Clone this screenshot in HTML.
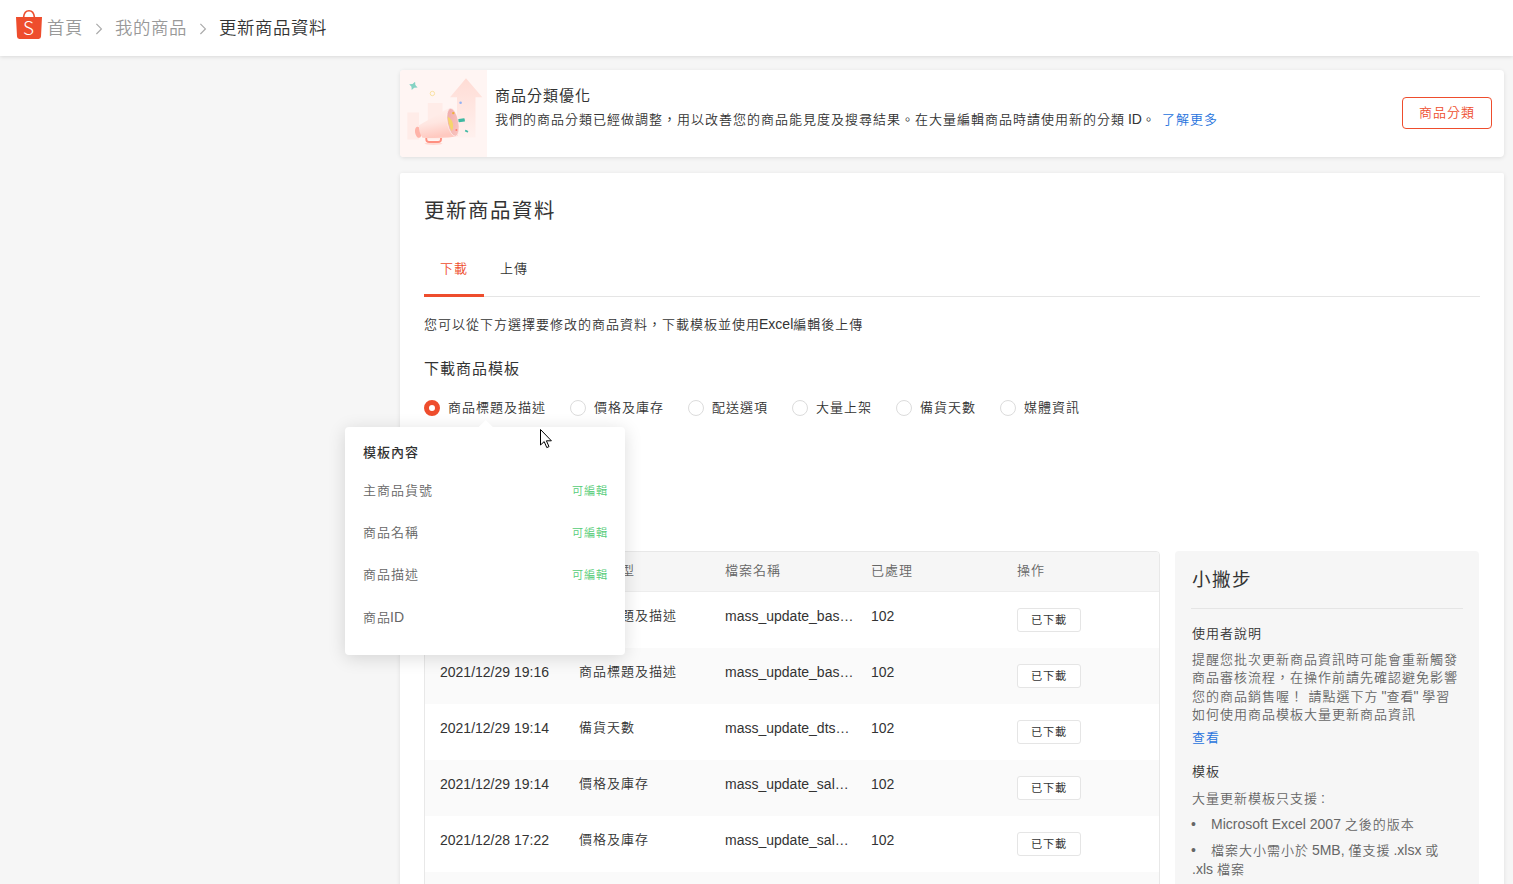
<!DOCTYPE html>
<html lang="zh-Hant">
<head>
<meta charset="utf-8">
<title>更新商品資料</title>
<style>
*{box-sizing:border-box;margin:0;padding:0}
html,body{width:1513px;height:884px;overflow:hidden}
body{background:#f6f6f6;font-family:"Liberation Sans","Noto Sans CJK TC",sans-serif;font-size:13px;letter-spacing:1px;color:#333;position:relative;font-weight:350}
.abs{position:absolute;white-space:nowrap}
/* header */
#hdr{position:absolute;left:0;top:0;width:1513px;height:56px;background:#fff;box-shadow:0 1px 4px rgba(0,0,0,.12);z-index:5}
#hdr .bc{position:absolute;top:0;height:56px;line-height:56px;font-size:17.4px;letter-spacing:.6px;color:#999;white-space:nowrap}
#hdr .cur{color:#333}
/* banner */
#banner{position:absolute;left:400px;top:70px;width:1104px;height:87px;background:#fff;border-radius:4px;box-shadow:0 1px 4px rgba(0,0,0,.1);overflow:hidden}
#banner .pic{position:absolute;left:0;top:0;width:87px;height:87px;background:#fff5f3}
#banner .t1{position:absolute;left:95px;top:15px;font-size:15px;letter-spacing:1px;line-height:22px;color:#333;font-weight:400}
#banner .t2{position:absolute;left:95px;top:39px;font-size:13px;letter-spacing:1px;line-height:20px;color:#333;white-space:nowrap}
#banner .t2 a{color:#2673dd;margin-left:6px}
#banner .btn{position:absolute;left:1002px;top:27px;width:90px;height:32px;border:1px solid #ee4d2d;border-radius:4px;color:#ee4d2d;font-size:13px;letter-spacing:1px;line-height:30px;text-align:center;background:#fff}
/* card */
#card{position:absolute;left:400px;top:173px;width:1104px;height:720px;background:#fff;border-radius:2px;box-shadow:0 1px 4px rgba(0,0,0,.1)}
#card h1{position:absolute;left:24px;top:24px;font-size:20.5px;letter-spacing:1.5px;line-height:28px;font-weight:400;color:#333}
.tabs{position:absolute;left:24px;top:72px;width:1056px;height:52px;border-bottom:1px solid #e5e5e5}
.tab{position:absolute;top:0;height:51px;line-height:48px;font-size:13px;letter-spacing:1px;width:60px;text-align:center;color:#333}
.tab.on{color:#ee4d2d}
.tab.on:after{content:"";position:absolute;left:0;bottom:-1px;width:60px;height:3px;background:#ee4d2d}
.desc{position:absolute;left:24px;top:141px;font-size:13px;letter-spacing:1px;line-height:20px;color:#333}
.h2{position:absolute;left:24px;top:185px;font-size:15px;letter-spacing:1px;line-height:22px;color:#333;font-weight:400}
.radio{position:absolute;top:226px;height:18px;line-height:18px;font-size:13px;letter-spacing:1px;color:#333;white-space:nowrap;padding-left:24px}
.radio i{position:absolute;left:0;top:1px;width:16px;height:16px;border-radius:50%;border:1px solid #dcdcdc;background:#fff}
.radio.on i{border:5px solid #ee4d2d}
/* table */
#tbl{position:absolute;left:24px;top:378px;width:736px;height:400px;border:1px solid #e8e8e8;border-radius:4px;overflow:hidden}
#tbl .th{position:absolute;left:0;top:0;width:100%;height:40px;background:#f6f6f6;border-bottom:1px solid #ededed;color:#666;font-size:13px;letter-spacing:1px;line-height:38px}
#tbl .tr{position:absolute;left:0;width:100%;height:56px;font-size:13px;letter-spacing:1px;color:#333}
#tbl .tr.alt{background:#fafafa}
#tbl span{position:absolute;white-space:nowrap}
#tbl .tr span{top:14px;line-height:20px}
.c1{left:15px}.c2{left:154px}.c3{left:300px}.c4{left:446px}.c5{left:592px}
#tbl .tr b{position:absolute;left:592px;top:16px;width:64px;height:24px;border:1px solid #e5e5e5;border-radius:3px;font-weight:400;font-size:11.2px;letter-spacing:.8px;line-height:22px;text-align:center;color:#333;background:#fff}
/* tips */
#tips{position:absolute;left:775px;top:378px;width:304px;height:400px;background:#f6f6f6;border-radius:4px;color:#666;font-size:13px;letter-spacing:1px}
#tips .tt{position:absolute;left:17px;top:15px;font-size:18.6px;letter-spacing:1.4px;line-height:28px;font-weight:400;color:#333}
#tips .hr{position:absolute;left:16px;top:57px;width:272px;height:1px;background:#e5e5e5}
#tips .sh{position:absolute;left:17px;font-size:13px;letter-spacing:1px;line-height:18px;color:#333;font-weight:350}
#tips p{position:absolute;left:17px;width:280px;font-size:13px;letter-spacing:1px;line-height:18px;color:#666;white-space:nowrap}
#tips a{color:#2673dd}
/* popover */
#pop{position:absolute;left:345px;top:427px;width:280px;height:228px;background:#fff;border-radius:4px;box-shadow:0 3px 18px rgba(0,0,0,.14);z-index:10}
#pop:before{content:"";position:absolute;left:135.6px;top:-4.7px;width:9.5px;height:9.5px;background:#fff;transform:rotate(45deg)}
#pop .pt{position:absolute;left:18px;top:16px;font-size:13px;letter-spacing:1px;line-height:20px;font-weight:500;color:#333}
#pop .r{position:absolute;left:18px;width:244px;height:20px;font-size:13px;letter-spacing:1px;line-height:20px;color:#666}
#pop .r em{position:absolute;right:-1px;top:0;font-style:normal;font-size:11.2px;letter-spacing:.8px;color:#5c7}
.l{font-size:14px;letter-spacing:0}
p .l,.r .l,.t2 .l,.desc .l{margin-left:-1px}
</style>
</head>
<body>
<div id="hdr">
  <svg class="abs" style="left:15px;top:9px" width="28" height="31" viewBox="0 0 28 31">
    <path d="M8.6 8.2 C9.0 4.3 11.2 1.7 14 1.7 C16.8 1.7 19.0 4.3 19.4 8.2" fill="none" stroke="#ee4d2d" stroke-width="1.6"/>
    <path d="M1 7.9 H27 L26 27.6 Q25.9 30 23.6 30 H4.4 Q2.1 30 2 27.6 Z" fill="#ee4d2d"/>
    <text x="14" y="26" text-anchor="middle" font-family="Noto Sans CJK TC, Liberation Sans, sans-serif" font-weight="300" font-size="19" fill="#fff">S</text>
  </svg>
  <div class="bc" style="left:47px">首頁</div>
  <svg class="abs" style="left:95px;top:22px" width="8" height="13" viewBox="0 0 8 13"><path d="M1.4 1.8 L6.4 6.9 L1.4 12" fill="none" stroke="#aaa" stroke-width="1.2"/></svg>
  <div class="bc" style="left:115px">我的商品</div>
  <svg class="abs" style="left:199px;top:22px" width="8" height="13" viewBox="0 0 8 13"><path d="M1.4 1.8 L6.4 6.9 L1.4 12" fill="none" stroke="#aaa" stroke-width="1.2"/></svg>
  <div class="bc cur" style="left:219px">更新商品資料</div>
</div>

<div id="banner">
  <svg class="pic" width="87" height="87" viewBox="0 0 87 87">
    <defs>
      <linearGradient id="ga" x1="0" y1="0" x2="0" y2="1"><stop offset="0" stop-color="#ffdcd5"/><stop offset="1" stop-color="#fff1ee"/></linearGradient>
      <linearGradient id="gc" x1="0" y1="0" x2="0.25" y2="1"><stop offset="0" stop-color="#fff3f0"/><stop offset=".55" stop-color="#ffe6e1"/><stop offset="1" stop-color="#ffc9c0"/></linearGradient>
      <linearGradient id="go" x1="0" y1="0" x2="1" y2="1"><stop offset="0" stop-color="#eea9a9"/><stop offset="1" stop-color="#fbc9c3"/></linearGradient>
    </defs>
    <rect width="87" height="87" fill="#fff5f3"/>
    <rect x="7.4" y="42.5" width="11.6" height="27" fill="#ffece8"/>
    <rect x="27.8" y="33" width="14.7" height="36.5" fill="#ffece8"/>
    <path d="M66 8.3 L82.3 27.2 H75.5 V67.5 H57 V27.2 H50 Z" fill="url(#ga)"/>
    <path d="M13.4 11.4 L14.9 14.4 L17.9 15.9 L14.9 17.4 L13.4 20.4 L11.9 17.4 L8.9 15.9 L11.9 14.4 Z" fill="#86d3c4" transform="rotate(22 13.4 15.9)"/>
    <circle cx="32.4" cy="23.5" r="2.2" fill="none" stroke="#f8dc90" stroke-width=".8"/>
    <circle cx="60.6" cy="32.7" r="1.3" fill="#93b2f4"/>
    <ellipse cx="33.5" cy="73.6" rx="9" ry="1.3" fill="#ffd9d2"/>
    <path d="M26.3 68 V69.2 Q26.3 72 29.3 72 H38 Q41 72 41 69.2 V68" fill="none" stroke="#ff8f80" stroke-width="1.9"/>
    <ellipse cx="18.2" cy="62.3" rx="3.1" ry="5.6" fill="#ffb3a8" transform="rotate(-12 18.2 62.3)"/>
    <path d="M19 55.2 L48.5 38.3 Q58 50 57.5 66 Q50 68.6 22.5 67.8 Q18.5 62 19 55.2 Z" fill="url(#gc)"/>
    <ellipse cx="53" cy="52.3" rx="5.6" ry="14.2" fill="url(#go)" stroke="#fff7f5" stroke-width=".6" transform="rotate(-11 53 52.3)"/>
    <path d="M47.6 46.6 Q53.5 50 53.1 57 Q52.6 61 51.3 60.6 Q48.2 54 47.6 46.6 Z" fill="#f6d56c"/>
    <circle cx="53.3" cy="43.1" r="1.2" fill="#efb037"/>
    <circle cx="56.4" cy="60.1" r="1" fill="#ff7d6e"/>
    <rect x="58.4" y="48.6" width="6.4" height="3.3" rx=".5" fill="#3db8a1" transform="rotate(-8 61.6 50.2)"/>
    <rect x="65" y="60.3" width="3.2" height="1.8" rx=".3" fill="#46bba6" transform="rotate(25 66.6 61.2)"/>
  </svg>
  <div class="t1">商品分類優化</div>
  <div class="t2">我們的商品分類已經做調整，用以改善您的商品能見度及搜尋結果。在大量編輯商品時請使用新的分類<span class="l"> ID</span>。<a>了解更多</a></div>
  <div class="btn">商品分類</div>
</div>

<div id="card">
  <h1>更新商品資料</h1>
  <div class="tabs">
    <div class="tab on" style="left:0">下載</div>
    <div class="tab" style="left:60px">上傳</div>
  </div>
  <div class="desc">您可以從下方選擇要修改的商品資料，下載模板並使用<span class="l">Excel</span>編輯後上傳</div>
  <div class="h2">下載商品模板</div>
  <div class="radio on" style="left:24px"><i></i>商品標題及描述</div>
  <div class="radio" style="left:170px"><i></i>價格及庫存</div>
  <div class="radio" style="left:288px"><i></i>配送選項</div>
  <div class="radio" style="left:392px"><i></i>大量上架</div>
  <div class="radio" style="left:496px"><i></i>備貨天數</div>
  <div class="radio" style="left:600px"><i></i>媒體資訊</div>

  <div id="tbl">
    <div class="th"><span class="c1">日期</span><span class="c2">模板類型</span><span class="c3">檔案名稱</span><span class="c4">已處理</span><span class="c5">操作</span></div>
    <div class="tr" style="top:40px"><span class="c1 l">2021/12/29 19:17</span><span class="c2">商品標題及描述</span><span class="c3 l">mass_update_bas…</span><span class="c4 l">102</span><b>已下載</b></div>
    <div class="tr alt" style="top:96px"><span class="c1 l">2021/12/29 19:16</span><span class="c2">商品標題及描述</span><span class="c3 l">mass_update_bas…</span><span class="c4 l">102</span><b>已下載</b></div>
    <div class="tr" style="top:152px"><span class="c1 l">2021/12/29 19:14</span><span class="c2">備貨天數</span><span class="c3 l">mass_update_dts…</span><span class="c4 l">102</span><b>已下載</b></div>
    <div class="tr alt" style="top:208px"><span class="c1 l">2021/12/29 19:14</span><span class="c2">價格及庫存</span><span class="c3 l">mass_update_sal…</span><span class="c4 l">102</span><b>已下載</b></div>
    <div class="tr" style="top:264px"><span class="c1 l">2021/12/28 17:22</span><span class="c2">價格及庫存</span><span class="c3 l">mass_update_sal…</span><span class="c4 l">102</span><b>已下載</b></div>
    <div class="tr alt" style="top:320px"></div>
  </div>

  <div id="tips">
    <div class="tt">小撇步</div>
    <div class="hr"></div>
    <div class="sh" style="top:74px">使用者說明</div>
    <p style="top:100px">提醒您批次更新商品資訊時可能會重新觸發<br>商品審核流程，在操作前請先確認避免影響<br>您的商品銷售喔！ 請點選下方<span class="l"> "</span>查看<span class="l">" </span>學習<br>如何使用商品模板大量更新商品資訊</p>
    <p style="top:178px"><a>查看</a></p>
    <div class="sh" style="top:212px">模板</div>
    <p style="top:238px">大量更新模板只支援<span class="l"> :</span></p>
    <p style="top:264px"><span class="l">•</span><span style="position:absolute;left:20px"><span class="l">Microsoft Excel 2007 </span>之後的版本</span></p>
    <p style="top:290px"><span class="l">•</span><span style="position:absolute;left:19px">檔案大小需小於<span class="l"> 5MB, </span>僅支援<span class="l"> .xlsx </span>或</span><br><span class="l" style="margin-left:0">.xls </span>檔案</p>
  </div>
</div>

<div id="pop">
  <div class="pt">模板內容</div>
  <div class="r" style="top:54px">主商品貨號<em>可編輯</em></div>
  <div class="r" style="top:96px">商品名稱<em>可編輯</em></div>
  <div class="r" style="top:138px">商品描述<em>可編輯</em></div>
  <div class="r" style="top:180px">商品<span class="l">ID</span></div>
</div>

<svg class="abs" style="left:539px;top:428px;z-index:20" width="14" height="21" viewBox="0 0 14 21"><path d="M1.5 1.5 V17 L5.2 13.6 L7.8 19.6 L10 18.6 L7.4 12.8 H12.4 Z" fill="#fff" stroke="#000" stroke-width="1" stroke-linejoin="miter"/></svg>
</body>
</html>
